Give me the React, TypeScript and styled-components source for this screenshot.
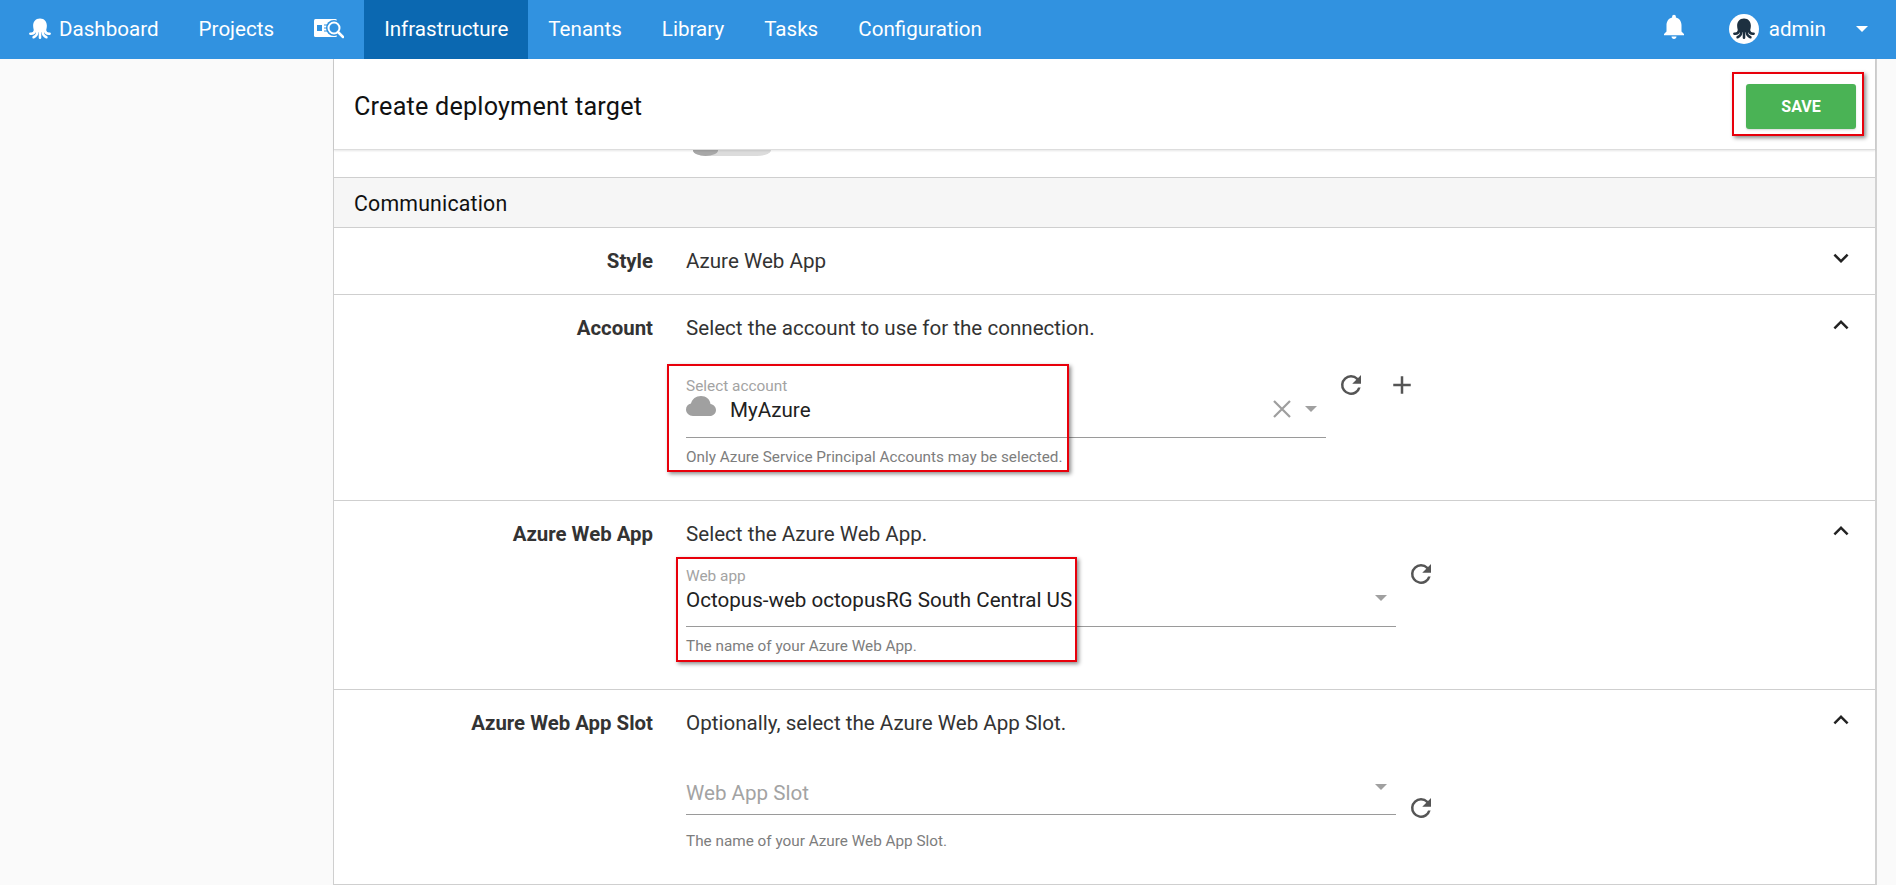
import React from "react";
import styled, { createGlobalStyle } from "styled-components";

const GlobalStyle = createGlobalStyle`
  html, body {
    margin: 0;
    padding: 0;
    background: #fafafa;
    font-family: "Roboto", "Liberation Sans", sans-serif;
    overflow: hidden;
  }
  * { box-sizing: border-box; }
`;

const Page = styled.div`
  width: 1896px;
  height: 885px;
  display: flex;
  flex-direction: column;
  overflow: hidden;
`;

const NavBar = styled.nav`
  height: 59px;
  flex: none;
  background: #3192e0;
  display: flex;
  align-items: stretch;
  padding-left: 29px;
  padding-bottom: 1px;
  color: #fff;
`;

const NavItem = styled.a<{ $active?: boolean }>`
  display: flex;
  align-items: center;
  gap: 8px;
  padding: 0 20px;
  margin-bottom: -1px;
  padding-bottom: 1px;
  font-size: 20.6px;
  color: #fff;
  background: ${(p) => (p.$active ? "#0b68b1" : "transparent")};
`;

const FirstItem = styled(NavItem)`
  padding-left: 0;
`;

const NavRight = styled.div`
  margin-left: auto;
  display: flex;
  align-items: center;
  padding-right: 28px;
`;

const BellSlot = styled.span`
  display: flex;
  margin-right: 45px;
  margin-top: -6px;
`;

const UserName = styled.span`
  font-size: 20.6px;
  margin: 0 30px 0 10px;
`;

const Avatar = styled.span`
  width: 30px;
  height: 30px;
  border-radius: 50%;
  background: #fff;
  display: flex;
  align-items: center;
  justify-content: center;
`;

const Main = styled.div`
  flex: 1;
  display: flex;
  padding-left: 333px;
  padding-right: 19px;
`;

const Panel = styled.div`
  flex: 1;
  background: #fff;
  border-left: 1px solid #cfcfcf;
  border-right: 2px solid #d2d2d2;
  border-bottom: 1px solid #cfcfcf;
  display: flex;
  flex-direction: column;
`;

const Header = styled.div`
  height: 91px;
  flex: none;
  padding: 0 10px 0 20px;
  display: flex;
  align-items: center;
  justify-content: space-between;
  position: relative;
  z-index: 2;
  background: #fff;
  border-bottom: 1px solid #ddd;
  box-shadow: 0 1px 2px rgba(0, 0, 0, 0.1);
`;

const Title = styled.h1`
  margin: 5px 0 0;
  font-size: 25.2px;
  font-weight: 400;
  color: #111;
  letter-spacing: 0.2px;
`;

const Highlight = styled.div<{ $x: number; $y: number; $w: number; $h: number }>`
  position: absolute;
  left: ${(p) => p.$x}px;
  top: ${(p) => p.$y}px;
  width: ${(p) => p.$w}px;
  height: ${(p) => p.$h}px;
  border: 2px solid #e8000b;
  box-shadow: 2px 2px 4px rgba(0, 0, 0, 0.45);
  pointer-events: none;
`;

const SaveButton = styled.button`
  width: 110px;
  height: 45px;
  margin-right: 9px;
  margin-top: 5px;
  border: none;
  border-radius: 3px;
  background: #4ab355;
  color: #fff;
  font-family: inherit;
  font-size: 16px;
  font-weight: 700;
  box-shadow: 0 1px 2px rgba(0, 0, 0, 0.15);
`;

const ToggleStrip = styled.div`
  height: 28px;
  flex: none;
  border-bottom: 1px solid #cfcfcf;
  padding-left: 359px;
`;

const ToggleTrack = styled.div`
  width: 78px;
  height: 6px;
  background: #dcdcdc;
  border-radius: 0 0 14px 14px / 0 0 6px 6px;
  position: relative;
`;

const ToggleKnob = styled.span`
  position: absolute;
  left: 0;
  top: 0;
  width: 25px;
  height: 6px;
  background: #a8a8a8;
  border-radius: 0 0 13px 13px / 0 0 6px 6px;
`;

const SectionBar = styled.div`
  height: 50px;
  flex: none;
  background: #f6f6f6;
  border-bottom: 1px solid #cfcfcf;
  padding: 2px 0 0 20px;
  display: flex;
  align-items: center;
  font-size: 21.3px;
  color: #111;
  letter-spacing: 0.2px;
`;

const Row = styled.section<{ $height: number; $last?: boolean }>`
  height: ${(p) => p.$height}px;
  flex: none;
  position: relative;
  display: grid;
  grid-template-columns: 319px 1fr 64px;
  column-gap: 33px;
  padding-top: 20px;
  border-bottom: ${(p) => (p.$last ? "none" : "1px solid #cfcfcf")};
`;

const RowLabel = styled.div`
  text-align: right;
  font-size: 20.4px;
  line-height: 26px;
  font-weight: 700;
  color: #333;
`;

const RowBody = styled.div`
  font-size: 20.6px;
  line-height: 26px;
  color: #333;
  min-width: 0;
`;

const Chevron = styled.div`
  margin-top: -5px;
  padding-left: 15px;
  color: #222;
`;

const ChevronSvg = styled.svg<{ $up?: boolean }>`
  display: block;
  transform: ${(p) => (p.$up ? "rotate(180deg)" : "none")};
`;

const FieldLine = styled.div<{ $top: number }>`
  display: flex;
  align-items: flex-start;
  margin-top: ${(p) => p.$top}px;
`;

const Field = styled.div<{ $width: number }>`
  width: ${(p) => p.$width}px;
  flex: none;
`;

const FloatLabel = styled.div`
  font-size: 15.4px;
  line-height: 16px;
  color: #a3a3a3;
`;

const ValueRow = styled.div<{ $height: number }>`
  height: ${(p) => p.$height}px;
  display: flex;
  align-items: flex-start;
  gap: 11px;
  border-bottom: 1px solid #9a9a9a;
  font-size: 20.6px;
  line-height: 26px;
  color: #212121;
`;

const Value = styled.span`
  flex: 1;
  padding-top: 3px;
`;

const Placeholder = styled(Value)`
  color: #a3a3a3;
`;

const Helper = styled.div<{ $top?: number }>`
  margin-top: ${(p) => p.$top ?? 10}px;
  font-size: 15.3px;
  line-height: 18px;
  color: #7d7d7d;
`;

const IconButton = styled.span<{ $left: number; $top: number }>`
  margin-left: ${(p) => p.$left}px;
  margin-top: ${(p) => p.$top}px;
  color: #555;
  display: flex;
  flex: none;
`;

const CloudSlot = styled.span`
  display: flex;
  margin-top: 2px;
  margin-right: 3px;
`;

const ClearSlot = styled.span`
  display: flex;
  margin-top: 4px;
  margin-right: 1px;
`;

const Arrow = styled.span<{ $top: number; $right: number; $color?: string }>`
  width: 0;
  height: 0;
  margin-top: ${(p) => p.$top}px;
  margin-right: ${(p) => p.$right}px;
  border-left: 6.5px solid transparent;
  border-right: 6.5px solid transparent;
  border-top: 6.5px solid ${(p) => p.$color ?? "#a0a0a0"};
  flex: none;
`;

const Octopus = ({ size, color }: { size: number; color: string }) => (
  <svg width={size} height={size} viewBox="0 0 24 24" fill={color} stroke="none">
    <path d="M12 .5C7 .5 4.500 4.200 4.500 8.500c0 3 1 4.500 1 7h13c0-2.500 1-4 1-7C19.500 4.200 17 .5 12 .5z" />
    <g fill="none" stroke={color} strokeWidth="2.800" strokeLinecap="round">
      <path d="M6.500 14c-.5 2.500-2.500 3.500-5 3.200" />
      <path d="M9 15c0 3-1.500 5-4 6" />
      <path d="M12 15v6.500" />
      <path d="M15 15c0 3 1.500 5 4 6" />
      <path d="M17.500 14c.5 2.500 2.500 3.500 5 3.200" />
    </g>
  </svg>
);

const Refresh = () => (
  <svg width="30" height="30" viewBox="0 0 24 24" fill="currentColor">
    <path d="M17.650 6.350A7.960 7.960 0 0 0 12 4a8 8 0 1 0 7.730 10h-2.080A6 6 0 1 1 12 6c1.660 0 3.140.69 4.220 1.780L13 11h7V4l-2.350 2.350z" />
  </svg>
);

const ChevronIcon = ({ up }: { up?: boolean }) => (
  <ChevronSvg $up={up} width="30" height="30" viewBox="0 0 24 24" fill="currentColor">
    <path d="M7.410 8.590 12 13.170l4.590-4.580L18 10l-6 6-6-6z" />
  </ChevronSvg>
);

const Bell = () => (
  <svg width="20" height="25" viewBox="4 2 16 20" fill="#fff">
    <path d="M12 22c1.100 0 2-.9 2-2h-4c0 1.100.9 2 2 2zm6-6v-5c0-3.100-1.600-5.600-4.500-6.300V4a1.500 1.500 0 0 0-3 0v.7C7.600 5.400 6 7.900 6 11v5l-2 2v1h16v-1l-2-2z" />
  </svg>
);

const Magnifier = () => (
  <svg width="30" height="20" viewBox="0 0 30 20">
    <rect x="0" y="0" width="23" height="18" rx="1.500" fill="#fff" />
    <path d="M3 6h5v6H3z" fill="#3192e0" />
    <circle cx="20" cy="9" r="8" fill="#3192e0" />
    <circle cx="20" cy="9" r="5.500" fill="#3192e0" stroke="#fff" strokeWidth="2" />
    <path d="M10 6h4M10 9h3M10 12h4" stroke="#3192e0" strokeWidth="1" />
    <path d="m24 13 5 5" stroke="#fff" strokeWidth="2.500" strokeLinecap="round" />
  </svg>
);

const Cloud = () => (
  <svg width="30" height="20" viewBox="0 0 30 20" fill="#a0a0a0">
    <path d="M7 20c-4 0-7-3-7-6.500C0 10.500 2 8 5 7.500 6 3 10 0 15 0s9 3 9.500 8c3 .5 5.500 3 5.500 6 0 3.500-3 6-6 6z" />
  </svg>
);

const Clear = () => (
  <svg width="22" height="22" viewBox="0 0 22 22" stroke="#9e9e9e" strokeWidth="2.200">
    <path d="m3 3 16 16M19 3 3 19" />
  </svg>
);

const Plus = () => (
  <svg width="30" height="30" viewBox="0 0 24 24" fill="currentColor">
    <path d="M19 13h-6v6h-2v-6H5v-2h6V5h2v6h6v2z" />
  </svg>
);

export default function App() {
  return (
    <>
      <GlobalStyle />
      <Page>
        <NavBar>
          <FirstItem>
            <Octopus size={22} color="#fff" />
            Dashboard
          </FirstItem>
          <NavItem>Projects</NavItem>
          <NavItem>
            <Magnifier />
          </NavItem>
          <NavItem $active>Infrastructure</NavItem>
          <NavItem>Tenants</NavItem>
          <NavItem>Library</NavItem>
          <NavItem>Tasks</NavItem>
          <NavItem>Configuration</NavItem>
          <NavRight>
            <BellSlot>
              <Bell />
            </BellSlot>
            <Avatar>
              <Octopus size={22} color="#1d3040" />
            </Avatar>
            <UserName>admin</UserName>
            <Arrow $top={0} $right={0} $color="#fff" />
          </NavRight>
        </NavBar>
        <Main>
          <Panel>
            <Header>
              <Title>Create deployment target</Title>
              <SaveButton>SAVE</SaveButton>
              <Highlight $x={1398} $y={13} $w={132} $h={64} />
            </Header>
            <ToggleStrip>
              <ToggleTrack>
                <ToggleKnob />
              </ToggleTrack>
            </ToggleStrip>
            <SectionBar>Communication</SectionBar>
            <Row $height={67}>
              <RowLabel>Style</RowLabel>
              <RowBody>Azure Web App</RowBody>
              <Chevron>
                <ChevronIcon />
              </Chevron>
            </Row>
            <Row $height={206}>
              <RowLabel>Account</RowLabel>
              <RowBody>
                Select the account to use for the connection.
                <FieldLine $top={37}>
                  <Field $width={640}>
                    <FloatLabel>Select account</FloatLabel>
                    <ValueRow $height={44}>
                      <CloudSlot>
                        <Cloud />
                      </CloudSlot>
                      <Value>MyAzure</Value>
                      <ClearSlot>
                        <Clear />
                      </ClearSlot>
                      <Arrow $top={12} $right={9} />
                    </ValueRow>
                    <Helper>Only Azure Service Principal Accounts may be selected.</Helper>
                  </Field>
                  <IconButton $left={10} $top={-8}>
                    <Refresh />
                  </IconButton>
                  <IconButton $left={21} $top={-8}>
                    <Plus />
                  </IconButton>
                </FieldLine>
              </RowBody>
              <Chevron>
                <ChevronIcon up />
              </Chevron>
              <Highlight $x={333} $y={69} $w={402} $h={108} />
            </Row>
            <Row $height={189}>
              <RowLabel>Azure Web App</RowLabel>
              <RowBody>
                Select the Azure Web App.
                <FieldLine $top={21}>
                  <Field $width={710}>
                    <FloatLabel>Web app</FloatLabel>
                    <ValueRow $height={43}>
                      <Value>Octopus-web octopusRG South Central US</Value>
                      <Arrow $top={11} $right={9} />
                    </ValueRow>
                    <Helper>The name of your Azure Web App.</Helper>
                  </Field>
                  <IconButton $left={10} $top={-9}>
                    <Refresh />
                  </IconButton>
                </FieldLine>
              </RowBody>
              <Chevron>
                <ChevronIcon up />
              </Chevron>
              <Highlight $x={342} $y={56} $w={401} $h={105} />
            </Row>
            <Row $height={194} $last>
              <RowLabel>Azure Web App Slot</RowLabel>
              <RowBody>
                Optionally, select the Azure Web App Slot.
                <FieldLine $top={41}>
                  <Field $width={710}>
                    <ValueRow $height={38}>
                      <Placeholder>Web App Slot</Placeholder>
                      <Arrow $top={7} $right={9} />
                    </ValueRow>
                    <Helper $top={17}>The name of your Azure Web App Slot.</Helper>
                  </Field>
                  <IconButton $left={10} $top={16}>
                    <Refresh />
                  </IconButton>
                </FieldLine>
              </RowBody>
              <Chevron>
                <ChevronIcon up />
              </Chevron>
            </Row>
          </Panel>
        </Main>
      </Page>
    </>
  );
}
